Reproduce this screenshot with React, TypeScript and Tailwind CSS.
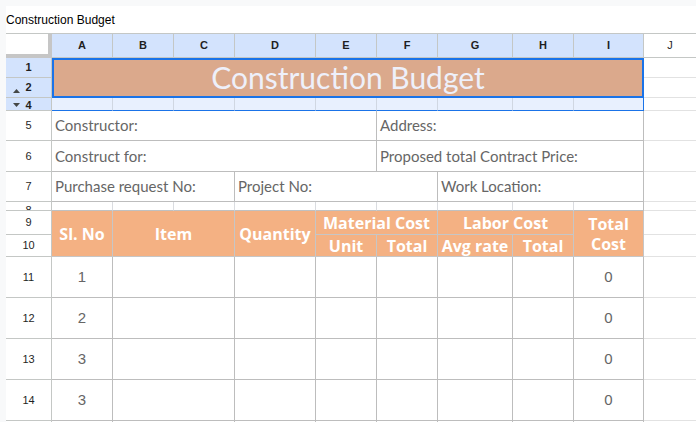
import React from "react";

const hdr = "flex items-center justify-center bg-[#d3e3fd] border-r border-b border-[#c4c7c5] text-[11px] font-bold text-[#1f1f1f] font-['Liberation_Sans',Arial,sans-serif]";
const rowHdr = "flex items-center justify-center bg-white border-r border-b border-[#c4c7c5] text-[11px] text-[#1f1f1f] font-['Liberation_Sans',Arial,sans-serif] overflow-hidden";
const rowHdrSel = "grid grid-cols-[14px_1fr_14px] items-center bg-[#d3e3fd] border-r border-b border-[#c4c7c5] text-[11px] font-bold text-[#1f1f1f] font-['Liberation_Sans',Arial,sans-serif]";
const label = "flex items-center pl-[3px] border-r border-b border-[#bdbdbd] text-[15px] text-[#666666] font-['Lato',sans-serif] whitespace-nowrap overflow-hidden";
const th = "flex flex-col items-center justify-center bg-[#f4b183] border-r border-b border-[#c6c6c6] text-[16px] font-bold text-white font-['Open_Sans',sans-serif] leading-[20px] whitespace-nowrap";
const td = "flex items-center justify-center border-r border-b border-[#bdbdbd] text-[15px] text-[#666666] font-['Liberation_Sans',Arial,sans-serif]";
const jcell = "border-b border-[#e2e2e2]";

function Up() {
  return (
    <svg width="7" height="4" viewBox="0 0 7 4" className="justify-self-end mt-[6px]">
      <path d="M0 4 L3.5 0 L7 4 Z" fill="#444746" />
    </svg>
  );
}
function Down() {
  return (
    <svg width="7" height="4" viewBox="0 0 7 4" className="justify-self-end">
      <path d="M0 0 L3.5 4 L7 0 Z" fill="#444746" />
    </svg>
  );
}

export default function App() {
  return (
    <div className="w-[696px] h-[422px] overflow-hidden bg-[#f8f9fa] pt-[6px] pl-[6px]">
      <div className="h-[27px] bg-white flex items-center text-[12px] text-black font-['Liberation_Sans',Arial,sans-serif]">
        Construction Budget
      </div>
      <div className="grid grid-cols-[46px_61px_61px_61px_81px_61px_61px_75px_61px_70px_1fr] grid-rows-[24px_20px_20px_13px_30px_31px_30px_9px_24px_22px_41px_41px_41px_41px_41px] bg-white border-t border-[#c4c7c5]">
        {/* column headers */}
        <div className="col-start-1 row-start-1 bg-white border-r-[4px] border-b-[4px] border-[#c6c6c6]" />
        <div className={`col-start-2 row-start-1 ${hdr}`}>A</div>
        <div className={`col-start-3 row-start-1 ${hdr}`}>B</div>
        <div className={`col-start-4 row-start-1 ${hdr}`}>C</div>
        <div className={`col-start-5 row-start-1 ${hdr}`}>D</div>
        <div className={`col-start-6 row-start-1 ${hdr}`}>E</div>
        <div className={`col-start-7 row-start-1 ${hdr}`}>F</div>
        <div className={`col-start-8 row-start-1 ${hdr}`}>G</div>
        <div className={`col-start-9 row-start-1 ${hdr}`}>H</div>
        <div className={`col-start-10 row-start-1 ${hdr}`}>I</div>
        <div className="col-start-11 row-start-1 flex items-center justify-center bg-white border-b border-[#c4c7c5] text-[11px] text-[#1f1f1f] font-['Liberation_Sans',Arial,sans-serif]">J</div>

        {/* row headers */}
        <div className={`col-start-1 row-start-2 ${rowHdrSel}`}><span /><span className="text-center">1</span><span /></div>
        <div className={`col-start-1 row-start-3 ${rowHdrSel}`}><Up /><span className="text-center">2</span><span /></div>
        <div className={`col-start-1 row-start-4 ${rowHdrSel}`}><Down /><span className="text-center leading-none pt-[2px]">4</span><span /></div>
        <div className={`col-start-1 row-start-5 ${rowHdr}`}>5</div>
        <div className={`col-start-1 row-start-6 ${rowHdr}`}>6</div>
        <div className={`col-start-1 row-start-7 ${rowHdr}`}>7</div>
        <div className="col-start-1 row-start-8 flex justify-center items-start pt-[3px] leading-none bg-white border-r border-b border-[#c4c7c5] text-[11px] text-[#1f1f1f] font-['Liberation_Sans',Arial,sans-serif] overflow-hidden">8</div>
        <div className={`col-start-1 row-start-9 ${rowHdr}`}>9</div>
        <div className={`col-start-1 row-start-10 ${rowHdr}`}>10</div>
        <div className={`col-start-1 row-start-11 ${rowHdr}`}>11</div>
        <div className={`col-start-1 row-start-12 ${rowHdr}`}>12</div>
        <div className={`col-start-1 row-start-13 ${rowHdr}`}>13</div>
        <div className={`col-start-1 row-start-14 ${rowHdr}`}>14</div>
        <div className="col-start-1 row-start-15 border-r border-[#c4c7c5]" />

        {/* title */}
        <div className="col-start-2 col-span-9 row-start-2 row-span-2 flex items-center justify-center pb-[3px] bg-[#dba98c] border-2 border-[#1a73e8] text-[30px] text-[#eef0fa] font-['Lato',sans-serif] leading-none">
          Construction Budget
        </div>

        {/* row 4 (selected, hidden row 3) */}
        <div className="col-start-2 row-start-4 bg-[#e8f0fe] border-r border-b border-r-[#d0d7e2] border-b-[#1a73e8]" />
        <div className="col-start-3 row-start-4 bg-[#e8f0fe] border-r border-b border-r-[#d0d7e2] border-b-[#1a73e8]" />
        <div className="col-start-4 row-start-4 bg-[#e8f0fe] border-r border-b border-r-[#d0d7e2] border-b-[#1a73e8]" />
        <div className="col-start-5 row-start-4 bg-[#e8f0fe] border-r border-b border-r-[#d0d7e2] border-b-[#1a73e8]" />
        <div className="col-start-6 row-start-4 bg-[#e8f0fe] border-r border-b border-r-[#d0d7e2] border-b-[#1a73e8]" />
        <div className="col-start-7 row-start-4 bg-[#e8f0fe] border-r border-b border-r-[#d0d7e2] border-b-[#1a73e8]" />
        <div className="col-start-8 row-start-4 bg-[#e8f0fe] border-r border-b border-r-[#d0d7e2] border-b-[#1a73e8]" />
        <div className="col-start-9 row-start-4 bg-[#e8f0fe] border-r border-b border-r-[#d0d7e2] border-b-[#1a73e8]" />
        <div className="col-start-10 row-start-4 bg-[#e8f0fe] border-r border-b border-[#1a73e8]" />

        {/* info rows */}
        <div className={`col-start-2 col-span-5 row-start-5 ${label}`}>Constructor:</div>
        <div className={`col-start-7 col-span-4 row-start-5 ${label}`}>Address:</div>
        <div className={`col-start-2 col-span-5 row-start-6 ${label}`}>Construct for:</div>
        <div className={`col-start-7 col-span-4 row-start-6 ${label}`}>Proposed total Contract Price:</div>
        <div className={`col-start-2 col-span-3 row-start-7 ${label}`}>Purchase request No:</div>
        <div className={`col-start-5 col-span-3 row-start-7 ${label}`}>Project No:</div>
        <div className={`col-start-8 col-span-3 row-start-7 ${label}`}>Work Location:</div>

        {/* row 8 */}
        <div className="col-start-2 row-start-8 border-r border-b border-r-[#dadce0] border-b-[#c0c0c0]" />
        <div className="col-start-3 row-start-8 border-r border-b border-r-[#dadce0] border-b-[#c0c0c0]" />
        <div className="col-start-4 row-start-8 border-r border-b border-r-[#dadce0] border-b-[#c0c0c0]" />
        <div className="col-start-5 row-start-8 border-r border-b border-r-[#dadce0] border-b-[#c0c0c0]" />
        <div className="col-start-6 row-start-8 border-r border-b border-r-[#dadce0] border-b-[#c0c0c0]" />
        <div className="col-start-7 row-start-8 border-r border-b border-r-[#dadce0] border-b-[#c0c0c0]" />
        <div className="col-start-8 row-start-8 border-r border-b border-r-[#dadce0] border-b-[#c0c0c0]" />
        <div className="col-start-9 row-start-8 border-r border-b border-r-[#dadce0] border-b-[#c0c0c0]" />
        <div className="col-start-10 row-start-8 border-r border-b border-[#bdbdbd]" />

        {/* table header */}
        <div className={`col-start-2 row-start-9 row-span-2 ${th}`}>Sl. No</div>
        <div className={`col-start-3 col-span-2 row-start-9 row-span-2 ${th}`}>Item</div>
        <div className={`col-start-5 row-start-9 row-span-2 ${th}`}>Quantity</div>
        <div className={`col-start-6 col-span-2 row-start-9 ${th}`}>Material Cost</div>
        <div className={`col-start-8 col-span-2 row-start-9 ${th}`}>Labor Cost</div>
        <div className={`col-start-10 row-start-9 row-span-2 ${th}`}>
          <span>Total</span>
          <span>Cost</span>
        </div>
        <div className={`col-start-6 row-start-10 ${th}`}>Unit</div>
        <div className={`col-start-7 row-start-10 ${th}`}>Total</div>
        <div className={`col-start-8 row-start-10 ${th}`}>Avg rate</div>
        <div className={`col-start-9 row-start-10 ${th}`}>Total</div>

        {/* data rows */}
        <div className={`col-start-2 row-start-11 ${td}`}>1</div>
        <div className={`col-start-3 col-span-2 row-start-11 ${td}`} />
        <div className={`col-start-5 row-start-11 ${td}`} />
        <div className={`col-start-6 row-start-11 ${td}`} />
        <div className={`col-start-7 row-start-11 ${td}`} />
        <div className={`col-start-8 row-start-11 ${td}`} />
        <div className={`col-start-9 row-start-11 ${td}`} />
        <div className={`col-start-10 row-start-11 ${td}`}>0</div>

        <div className={`col-start-2 row-start-12 ${td}`}>2</div>
        <div className={`col-start-3 col-span-2 row-start-12 ${td}`} />
        <div className={`col-start-5 row-start-12 ${td}`} />
        <div className={`col-start-6 row-start-12 ${td}`} />
        <div className={`col-start-7 row-start-12 ${td}`} />
        <div className={`col-start-8 row-start-12 ${td}`} />
        <div className={`col-start-9 row-start-12 ${td}`} />
        <div className={`col-start-10 row-start-12 ${td}`}>0</div>

        <div className={`col-start-2 row-start-13 ${td}`}>3</div>
        <div className={`col-start-3 col-span-2 row-start-13 ${td}`} />
        <div className={`col-start-5 row-start-13 ${td}`} />
        <div className={`col-start-6 row-start-13 ${td}`} />
        <div className={`col-start-7 row-start-13 ${td}`} />
        <div className={`col-start-8 row-start-13 ${td}`} />
        <div className={`col-start-9 row-start-13 ${td}`} />
        <div className={`col-start-10 row-start-13 ${td}`}>0</div>

        <div className={`col-start-2 row-start-14 ${td}`}>3</div>
        <div className={`col-start-3 col-span-2 row-start-14 ${td}`} />
        <div className={`col-start-5 row-start-14 ${td}`} />
        <div className={`col-start-6 row-start-14 ${td}`} />
        <div className={`col-start-7 row-start-14 ${td}`} />
        <div className={`col-start-8 row-start-14 ${td}`} />
        <div className={`col-start-9 row-start-14 ${td}`} />
        <div className={`col-start-10 row-start-14 ${td}`}>0</div>

        <div className="col-start-2 row-start-15 border-r border-[#bdbdbd]" />
        <div className="col-start-3 col-span-2 row-start-15 border-r border-[#bdbdbd]" />
        <div className="col-start-5 row-start-15 border-r border-[#bdbdbd]" />
        <div className="col-start-6 row-start-15 border-r border-[#bdbdbd]" />
        <div className="col-start-7 row-start-15 border-r border-[#bdbdbd]" />
        <div className="col-start-8 row-start-15 border-r border-[#bdbdbd]" />
        <div className="col-start-9 row-start-15 border-r border-[#bdbdbd]" />
        <div className="col-start-10 row-start-15 border-r border-[#bdbdbd]" />

        {/* column J */}
        <div className={`col-start-11 row-start-2 ${jcell}`} />
        <div className={`col-start-11 row-start-3 ${jcell}`} />
        <div className={`col-start-11 row-start-4 ${jcell}`} />
        <div className={`col-start-11 row-start-5 ${jcell}`} />
        <div className={`col-start-11 row-start-6 ${jcell}`} />
        <div className={`col-start-11 row-start-7 ${jcell}`} />
        <div className={`col-start-11 row-start-8 ${jcell}`} />
        <div className={`col-start-11 row-start-9 ${jcell}`} />
        <div className={`col-start-11 row-start-10 ${jcell}`} />
        <div className={`col-start-11 row-start-11 ${jcell}`} />
        <div className={`col-start-11 row-start-12 ${jcell}`} />
        <div className={`col-start-11 row-start-13 ${jcell}`} />
        <div className={`col-start-11 row-start-14 ${jcell}`} />
      </div>
    </div>
  );
}
